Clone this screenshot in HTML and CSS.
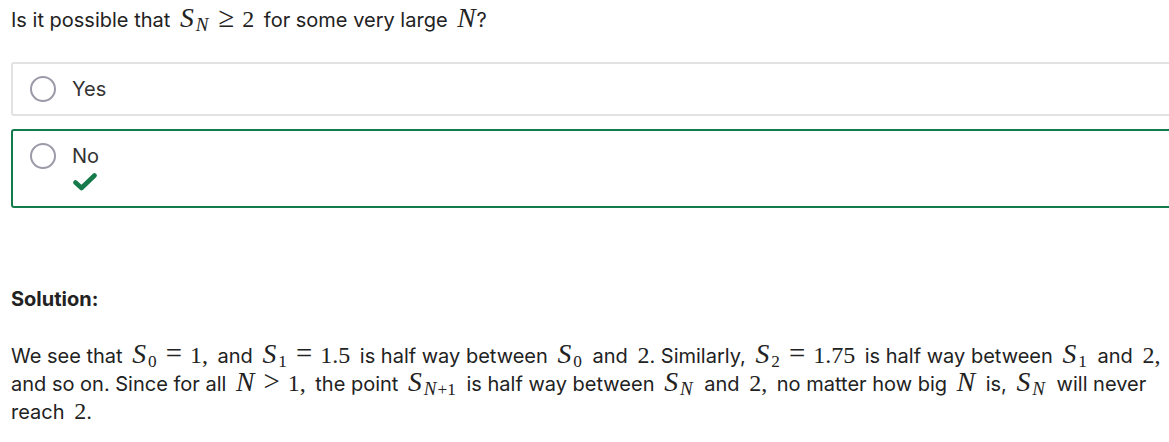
FILE: index.html
```html
<!DOCTYPE html>
<html>
<head>
<meta charset="utf-8">
<link rel="stylesheet" href="styles.css">
</head>
<body>
<div class="page">
  <p class="question">Is it possible that <span class="m"><i>S</i><sub><i>N</i></sub><span class="op">≥</span>2</span> for some very large <span class="m np"><i>N</i></span>?</p>

  <div class="options">
    <div class="option">
      <span class="radio"></span>
      <div class="label">Yes</div>
    </div>
    <div class="option correct">
      <span class="radio"></span>
      <div class="label">
        <div>No</div>
        <svg class="check" width="24" height="18" viewBox="0 0 24 18"><path d="M2.5 9.5 L8.5 15 L21.5 2.5" fill="none" stroke="#167a4a" stroke-width="4.6" stroke-linecap="round" stroke-linejoin="round"/></svg>
      </div>
    </div>
  </div>

  <h3 class="sol-title">Solution:</h3>

  <p class="solution">We see that <span class="m"><i>S</i><sub>0</sub><span class="op">=</span>1,</span> and <span class="m"><i>S</i><sub>1</sub><span class="op">=</span>1.5</span> is half way between <span class="m"><i>S</i><sub>0</sub></span> and <span class="m np">2</span>. Similarly, <span class="m"><i>S</i><sub>2</sub><span class="op">=</span>1.75</span> is half way between <span class="m"><i>S</i><sub>1</sub></span> and <span class="m">2,</span> and so on. Since for all <span class="m"><i>N</i><span class="op">&gt;</span>1,</span> the point <span class="m"><i>S</i><sub><i>N</i>+1</sub></span> is half way between <span class="m"><i>S</i><sub><i>N</i></sub></span> and <span class="m">2,</span> no matter how big <span class="m"><i>N</i></span> is, <span class="m"><i>S</i><sub><i>N</i></sub></span> will never reach <span class="m np">2</span>.</p>
</div>
</body>
</html>
```
FILE: styles.css
```css
html, body {
  margin: 0;
  padding: 0;
  background: #fff;
  overflow: hidden;
}
body {
  font-family: Inter, "Liberation Sans", sans-serif;
  font-size: 20px;
  color: #222;
}
.page {
  padding: 0 0 0 11px;
  width: 1180px;
}
.question {
  margin: 0;
  padding-top: 6px;
  line-height: 28px;
}
.m {
  font-family: "Liberation Serif", "DejaVu Serif", serif;
  font-size: 1.2em;
  padding: 0 4px;
  white-space: nowrap;
  line-height: 0;
}
.m.np {
  padding-right: 0;
}
.m i {
  font-style: italic;
  font-size: 1.15em;
  letter-spacing: 1px;
}
.m sub {
  font-size: 0.72em;
  vertical-align: -0.22em;
  line-height: 0;
  padding: 0 1px;
}
.m sub i {
  font-size: 1.1em;
}
.op {
  font-size: 1.2em;
  padding: 0 8px;
}
.options {
  margin-top: 28px;
  display: flex;
  flex-direction: column;
  gap: 13px;
}
.option {
  border: 2px solid #e2e2e2;
  border-radius: 3px;
  display: flex;
  align-items: flex-start;
  padding: 12px 16px 12px 17px;
}
.option.correct {
  border-color: #137a4b;
  padding-bottom: 15px;
}
.radio {
  width: 22px;
  height: 22px;
  border: 2px solid #9c9aa8;
  border-radius: 50%;
  flex: none;
}
.label {
  margin-left: 16px;
  line-height: 26px;
  color: #333;
}
.check {
  display: block;
  margin-top: 4px;
  margin-left: 1px;
}
.sol-title {
  margin: 78px 0 0;
  font-size: 20px;
  font-weight: 700;
  line-height: 26px;
}
.solution {
  margin: 30px 0 0;
  line-height: 28px;
  width: 1158px;
}
```
